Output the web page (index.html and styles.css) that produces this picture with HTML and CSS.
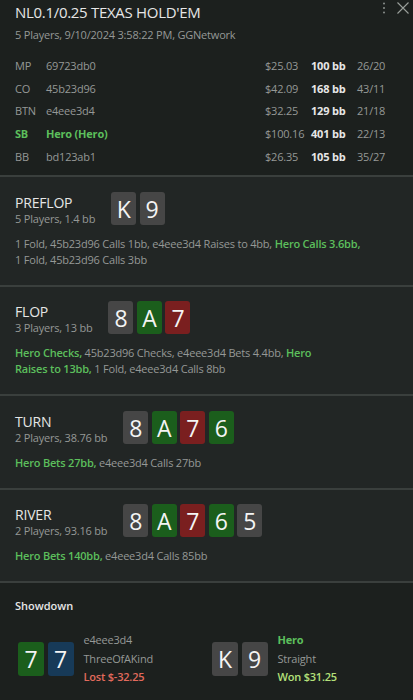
FILE: index.html
```html
<!DOCTYPE html>
<html lang="en">
<head>
    <meta charset="UTF-8">
    <meta name="viewport" content="width=device-width, initial-scale=1.0">
    <title>Hand Replay</title>
    <link rel="stylesheet" href="styles.css">
</head>
<body>
    <div class="panel">
        <div class="header">
            <div class="header-tools">
                <svg class="tool-icon" width="6" height="14" viewBox="0 0 6 14"><circle cx="3" cy="2.5" r="1" fill="#8a8f8c"/><circle cx="3" cy="7" r="1" fill="#8a8f8c"/><circle cx="3" cy="11.5" r="1" fill="#8a8f8c"/></svg>
                <svg class="tool-icon" width="14" height="14" viewBox="0 0 14 14"><path d="M1.5 1.5 L12.5 12.5 M12.5 1.5 L1.5 12.5" stroke="#9a9f9c" stroke-width="1.1"/></svg>
            </div>
            <h1>NL0.1/0.25 TEXAS HOLD'EM</h1>
            <div class="subtitle">5 Players, 9/10/2024 3:58:22 PM, GGNetwork</div>

            <div class="players">
                <div class="player">
                    <span class="pos">MP</span><span class="name">69723db0</span>
                    <span class="money">$25.03</span><span class="bb">100 bb</span><span class="stats">26/20</span>
                </div>
                <div class="player">
                    <span class="pos">CO</span><span class="name">45b23d96</span>
                    <span class="money">$42.09</span><span class="bb">168 bb</span><span class="stats">43/11</span>
                </div>
                <div class="player">
                    <span class="pos">BTN</span><span class="name">e4eee3d4</span>
                    <span class="money">$32.25</span><span class="bb">129 bb</span><span class="stats">21/18</span>
                </div>
                <div class="player hero">
                    <span class="pos">SB</span><span class="name">Hero (Hero)</span>
                    <span class="money">$100.16</span><span class="bb">401 bb</span><span class="stats">22/13</span>
                </div>
                <div class="player">
                    <span class="pos">BB</span><span class="name">bd123ab1</span>
                    <span class="money">$26.35</span><span class="bb">105 bb</span><span class="stats">35/27</span>
                </div>
            </div>
        </div>

        <div class="street street-tall">
            <div class="street-head">
                <div class="street-title">
                    <h2>PREFLOP</h2>
                    <div class="street-info">5 Players, 1.4 bb</div>
                </div>
                <div class="cards">
                    <span class="card grey">K</span><span class="card grey">9</span>
                </div>
            </div>
            <p class="actions">1 Fold, 45b23d96 Calls 1bb, e4eee3d4 Raises to 4bb, <b class="hero-act">Hero Calls 3.6bb,</b> 1 Fold, 45b23d96 Calls 3bb</p>
        </div>

        <div class="street street-tall flop">
            <div class="street-head">
                <div class="street-title">
                    <h2>FLOP</h2>
                    <div class="street-info">3 Players, 13 bb</div>
                </div>
                <div class="cards">
                    <span class="card grey">8</span><span class="card green">A</span><span class="card red">7</span>
                </div>
            </div>
            <p class="actions"><b class="hero-act">Hero Checks,</b> 45b23d96 Checks, e4eee3d4 Bets 4.4bb, <b class="hero-act">Hero<br>Raises to 13bb,</b> 1 Fold, e4eee3d4 Calls 8bb</p>
        </div>

        <div class="street">
            <div class="street-head">
                <div class="street-title">
                    <h2>TURN</h2>
                    <div class="street-info">2 Players, 38.76 bb</div>
                </div>
                <div class="cards">
                    <span class="card grey">8</span><span class="card green">A</span><span class="card red">7</span><span class="card green">6</span>
                </div>
            </div>
            <p class="actions"><b class="hero-act">Hero Bets 27bb,</b> e4eee3d4 Calls 27bb</p>
        </div>

        <div class="street river">
            <div class="street-head">
                <div class="street-title">
                    <h2>RIVER</h2>
                    <div class="street-info">2 Players, 93.16 bb</div>
                </div>
                <div class="cards">
                    <span class="card grey">8</span><span class="card green">A</span><span class="card red">7</span><span class="card green">6</span><span class="card grey">5</span>
                </div>
            </div>
            <p class="actions"><b class="hero-act">Hero Bets 140bb,</b> e4eee3d4 Calls 85bb</p>
        </div>

        <div class="showdown">
            <h3>Showdown</h3>
            <div class="hands">
                <div class="hand">
                    <div class="cards">
                        <span class="card green">7</span><span class="card blue">7</span>
                    </div>
                    <div class="hand-info">
                        <div class="hand-player">e4eee3d4</div>
                        <div class="hand-rank">ThreeOfAKind</div>
                        <div class="result lost">Lost $-32.25</div>
                    </div>
                </div>
                <div class="hand">
                    <div class="cards">
                        <span class="card grey">K</span><span class="card grey">9</span>
                    </div>
                    <div class="hand-info">
                        <div class="hand-player is-hero">Hero</div>
                        <div class="hand-rank">Straight</div>
                        <div class="result won">Won $31.25</div>
                    </div>
                </div>
            </div>
        </div>
    </div>
</body>
</html>
```

FILE: styles.css
```css
:root {
    --bg-dark: #1c201e;
    --bg-section: #222625;
    --border-color: #3a3f3d;
    --text-color: #e6e6e6;
    --muted-color: #959896;
    --hero-color: #5cbf5c;
    --card-grey: #464646;
    --card-green: #1b5e1c;
    --card-red: #7a1f1f;
    --card-blue: #173a58;
}

* {
    margin: 0;
    padding: 0;
    box-sizing: border-box;
}

body {
    font-family: 'Open Sans', 'Noto Sans', sans-serif;
    background-color: var(--bg-dark);
    color: var(--muted-color);
    font-size: 11px;
    width: 413px;
    height: 700px;
    overflow: hidden;
}

.panel {
    display: flex;
    flex-direction: column;
}

/* header */

.header {
    position: relative;
    height: 177px;
    padding: 2px 26px 0 15px;
    background-color: var(--bg-dark);
    border-bottom: 2px solid var(--border-color);
}

.header-tools {
    position: absolute;
    top: 1px;
    right: 3px;
    display: flex;
    align-items: center;
    gap: 9px;
}

h1 {
    font-size: 15px;
    font-weight: 400;
    color: var(--text-color);
    letter-spacing: -0.3px;
    line-height: 20px;
}

.subtitle {
    margin-top: 5px;
    line-height: 16px;
    letter-spacing: -0.2px;
}

.players {
    margin-top: 12px;
}

.player {
    display: grid;
    grid-template-columns: 31px 1fr 46px 46px 30px;
    line-height: 22.7px;
    letter-spacing: -0.2px;
}

.player .bb {
    color: var(--text-color);
    font-weight: 700;
}

.player.hero .pos,
.player.hero .name {
    color: var(--hero-color);
    font-weight: 700;
}

/* streets */

.street {
    height: 94px;
    padding: 15px 50px 0 15px;
    background-color: var(--bg-section);
    border-bottom: 2px solid var(--border-color);
}

.street-tall {
    height: 110px;
}

.street.flop {
    height: 109px;
    padding-top: 14px;
}

.street.river {
    height: 93px;
    padding-top: 14px;
}

.street-head {
    display: flex;
    align-items: flex-start;
    gap: 16px;
}

.street-title {
    padding-top: 2px;
}

h2 {
    font-size: 14px;
    font-weight: 400;
    color: var(--text-color);
    line-height: 17px;
    letter-spacing: -0.2px;
}

.street-info {
    line-height: 16px;
    letter-spacing: -0.2px;
}

.cards {
    display: flex;
    gap: 3.5px;
}

.card {
    width: 25px;
    height: 33px;
    border-radius: 3px;
    display: flex;
    align-items: center;
    justify-content: center;
    font-size: 23px;
    color: #f4f4f4;
}

.card.grey { background-color: var(--card-grey); }
.card.green { background-color: var(--card-green); }
.card.red { background-color: var(--card-red); }
.card.blue { background-color: var(--card-blue); }

.actions {
    margin-top: 9px;
    line-height: 16px;
    letter-spacing: -0.2px;
}

.hero-act {
    color: var(--hero-color);
    font-weight: 600;
}

/* showdown */

.showdown {
    flex: 1;
    padding: 15px 15px 0;
    background-color: var(--bg-dark);
}

h3 {
    font-size: 11px;
    font-weight: 600;
    color: var(--text-color);
    line-height: 16px;
}

.hands {
    display: grid;
    grid-template-columns: 194px 1fr;
    margin-top: 17px;
    padding-left: 3px;
}

.hand {
    display: flex;
    align-items: center;
    gap: 10px;
}

.hand .card {
    width: 26px;
    height: 34px;
}

.hand-info {
    line-height: 18.5px;
    letter-spacing: -0.2px;
}

.hand-player.is-hero {
    color: var(--hero-color);
    font-weight: 700;
}

.result {
    font-weight: 600;
}

.result.lost { color: #e26a5c; }
.result.won { color: #b4e07a; }
```
